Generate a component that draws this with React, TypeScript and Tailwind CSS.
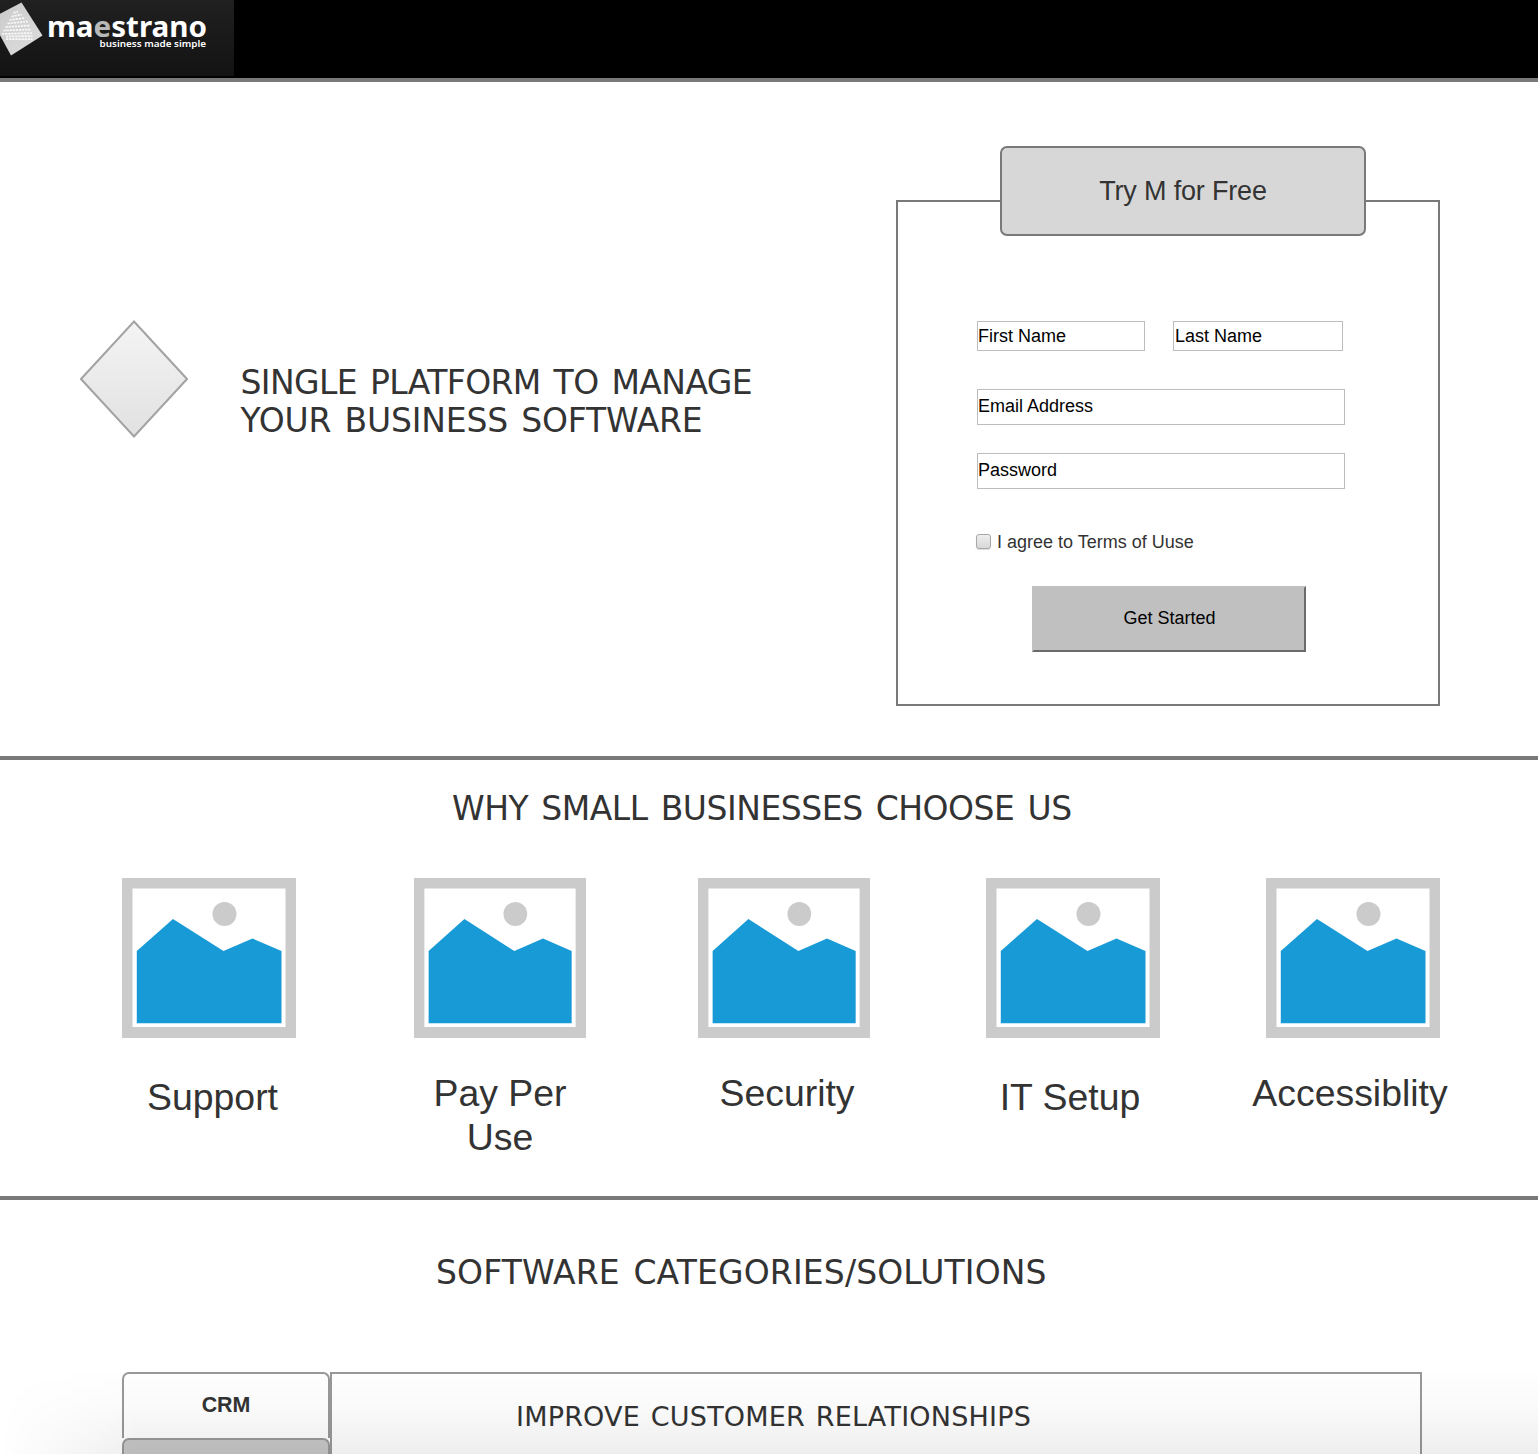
import React from "react";

const arial = "font-['Liberation_Sans',Arial,sans-serif]";
const verdana = "font-['DejaVu_Sans',Verdana,sans-serif]";

function Logo() {
  return (
    <svg width="234" height="76" viewBox="0 0 234 76" className="block">
      <defs>
        <linearGradient id="logoBg" x1="0" y1="0" x2="0" y2="1">
          <stop offset="0" stopColor="#202020" />
          <stop offset="1" stopColor="#131313" />
        </linearGradient>
        <linearGradient id="tile" x1="0" y1="0" x2="1" y2="1">
          <stop offset="0" stopColor="#c9c9c9" />
          <stop offset="1" stopColor="#dedede" />
        </linearGradient>
      </defs>
      <rect width="234" height="76" fill="url(#logoBg)" />
      <path d="M-9 18.500L21.500 2.500L42.500 35.500L11 55.500Z" fill="url(#tile)" />
      <g fill="none" stroke="#f8f8f8" strokeWidth="1.700" strokeDasharray="2.300 0.800">
        <path d="M13.500 13L18 11.500" />
        <path d="M11.500 16.500L22 14.500" />
        <path d="M9.500 20L25 18" />
        <path d="M7.500 23.500L28 21.500" />
        <path d="M5.500 27L30 25.500" />
        <path d="M3.500 30.500L31 29.500" />
        <path d="M2 34L32 33" />
        <path d="M6 36.500L32.500 36" />
        <path d="M6 39.200L32.500 39.200" />
      </g>
      <g fill="#fff" fontFamily="'Noto Sans', 'Open Sans', sans-serif">
        <text x="47" y="36.500" fontSize="29" fontWeight="700" textLength="160" lengthAdjust="spacingAndGlyphs">
          ma<tspan fill="#b8b8b8">e</tspan>strano
        </text>
        <text x="99.500" y="47" fontSize="9" fontWeight="600" textLength="106.500" lengthAdjust="spacingAndGlyphs">
          business made simple
        </text>
      </g>
    </svg>
  );
}

function Field({ label, className }: { label: string; className: string }) {
  return <div className={`border border-[#bcbcbc] bg-white text-[18px] leading-[20px] text-black whitespace-nowrap ${className}`}>{label}</div>;
}

function Placeholder({ className }: { className: string }) {
  return (
    <svg viewBox="0 0 174 160" preserveAspectRatio="none" className={`block h-[160px] ${className}`}>
      <rect width="174" height="160" fill="#cbcbcb" />
      <rect x="10.500" y="10.500" width="153" height="138.500" fill="#fff" />
      <circle cx="102.500" cy="36" r="12" fill="#cbcbcb" />
      <path d="M14.800 73L51 41L101.500 73L130.500 60.500L159.500 73V145.300H14.800Z" fill="#189ad7" />
    </svg>
  );
}

const features = [
  { label: "Support", col: "ml-[122px] w-[174px]", img: "w-[174px]", text: "mt-[37px] pl-[7px]" },
  { label: "Pay Per Use", col: "ml-[118px] w-[172px]", img: "w-[172px]", text: "mt-[33px] px-[15px]" },
  { label: "Security", col: "ml-[112px] w-[172px]", img: "w-[172px]", text: "mt-[33px] pl-[6px]" },
  { label: "IT Setup", col: "ml-[116px] w-[174px]", img: "w-[174px]", text: "mt-[37px] pr-[6px]" },
  { label: "Accessiblity", col: "ml-[106px] w-[174px]", img: "w-[174px]", text: "mt-[33px] -ml-[18px] -mr-[12px]" },
];

export default function App() {
  return (
    <div className={`relative h-[1454px] w-[1538px] overflow-hidden bg-white text-[#333] ${arial}`}>
      <header className="h-[82px] border-b-4 border-[#797979] bg-black">
        <Logo />
      </header>

      <section className="flex h-[678px] border-b-4 border-[#797979]">
        <svg width="108" height="118" viewBox="0 0 108 118" className="mt-[238px] ml-[80px] block shrink-0">
          <defs>
            <linearGradient id="gem" x1="0" y1="0" x2="0" y2="1">
              <stop offset="0" stopColor="#f4f4f4" />
              <stop offset="1" stopColor="#e1e1e1" />
            </linearGradient>
          </defs>
          <path d="M54 1.500L107 59L54 116.500L1 59Z" fill="url(#gem)" stroke="#a3a3a3" strokeWidth="2" />
        </svg>
        <h1 className={`mt-[282px] ml-[52.5px] w-[603.5px] shrink-0 text-[33px] leading-[38px] [word-spacing:3px] ${verdana}`}>
          <span className="tracking-[-0.6px]">SINGLE PLATFORM TO MANAGE</span>
          <br />
          <span className="tracking-[-0.18px]">YOUR BUSINESS SOFTWARE</span>
        </h1>
        <div className="mt-[118px] ml-[52px] h-[506px] w-[544px] shrink-0 border-2 border-[#797979]">
          <div className="-mt-[56px] ml-[102px] flex h-[90px] w-[366px] items-center justify-center rounded-[7px] border-2 border-[#797979] bg-[#d7d7d7] pt-px text-[27px] tracking-[-0.18px]">
            Try M for Free
          </div>
          <div className="mt-[85px] ml-[79px] flex gap-[28px]">
            <Field label="First Name" className="h-[30px] w-[168px] pt-[4px]" />
            <Field label="Last Name" className="h-[30px] w-[170px] pt-[4px] pl-px" />
          </div>
          <Field label="Email Address" className="mt-[38px] ml-[79px] h-[36px] w-[368px] pt-[6px]" />
          <Field label="Password" className="mt-[28px] ml-[79px] h-[36px] w-[368px] pt-[6px]" />
          <div className="mt-[43px] ml-[78px] flex h-[20px] items-center gap-[6px] text-[18px] leading-[20px]">
            <span className="mb-[2px] size-[15px] rounded-[3px] border border-[#a6a6a6] bg-linear-to-b from-[#eee] to-[#d8d8d8] shadow-[0_1px_1px_#ddd]" />
            I agree to Terms of Uuse
          </div>
          <div className="mt-[34px] ml-[134px] flex h-[66px] w-[274px] items-center justify-center border-2 border-t-[#c0c0c0] border-r-[#6b6b6b] border-b-[#6b6b6b] border-l-[#c0c0c0] bg-[#c0c0c0] pb-[2px] pl-px text-[18px] text-black">
            Get Started
          </div>
        </div>
      </section>

      <section className="h-[440px] border-b-4 border-[#797979]">
        <h2 className={`ml-[452px] pt-[29px] text-[33px] leading-[39px] tracking-[-0.47px] [word-spacing:3px] whitespace-nowrap ${verdana}`}>WHY SMALL BUSINESSES CHOOSE US</h2>
        <div className="mt-[50px] flex">
          {features.map((f) => (
            <div key={f.label} className={`shrink-0 ${f.col}`}>
              <Placeholder className={f.img} />
              <div className={`text-center text-[37.4px] leading-[44px] ${f.text}`}>{f.label}</div>
            </div>
          ))}
        </div>
      </section>

      <section>
        <h2 className={`ml-[436px] pt-[53px] text-[33px] leading-[39px] tracking-[0.14px] [word-spacing:3px] whitespace-nowrap ${verdana}`}>SOFTWARE CATEGORIES/SOLUTIONS</h2>
        <div className="mt-[80px] ml-[122px] flex h-[120px]">
          <div className="w-[208px]">
            <div className="flex h-[66px] items-center justify-center rounded-t-[7px] border-2 border-b-0 border-[#999] pb-[2px] text-[21.4px] font-bold">CRM</div>
            <div className="h-[66px] rounded-t-[7px] border-2 border-[#999] bg-[#c8c8c8]" />
          </div>
          <div className={`w-[1092px] border-2 border-[#999] pt-[27px] pl-[184px] text-[27px] leading-[32px] tracking-[0.2px] [word-spacing:2px] whitespace-nowrap ${verdana}`}>
            IMPROVE CUSTOMER RELATIONSHIPS
          </div>
        </div>
      </section>

      <div className="pointer-events-none absolute bottom-0 left-0 h-[86px] w-full bg-[linear-gradient(to_bottom,transparent,rgba(0,0,0,0.02)_45%,rgba(0,0,0,0.065))] [mask-image:linear-gradient(to_right,transparent,black_140px)]" />
    </div>
  );
}
